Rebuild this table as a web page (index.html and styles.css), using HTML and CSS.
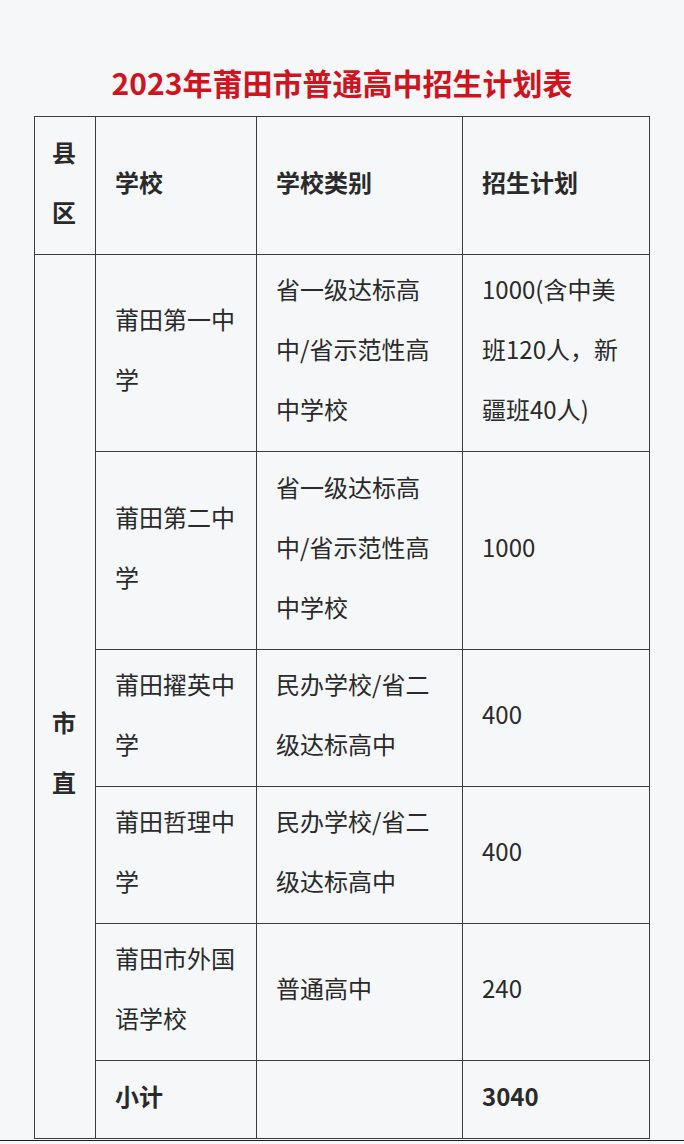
FILE: index.html
```html
<!DOCTYPE html>
<html lang="zh-CN">
<head>
<meta charset="utf-8">
<title>2023年莆田市普通高中招生计划表</title>
<link rel="stylesheet" href="styles.css">
</head>
<body>
<div class="page">
  <h1 class="title">2023年莆田市普通高中招生计划表</h1>
  <table class="plan">
    <colgroup>
      <col class="c1"><col class="c2"><col class="c3"><col class="c4">
    </colgroup>
    <thead>
      <tr>
        <th class="area">县<br>区</th>
        <th>学校</th>
        <th>学校类别</th>
        <th>招生计划</th>
      </tr>
    </thead>
    <tbody>
      <tr>
        <td class="area area-body" rowspan="6"><b>市<br>直</b></td>
        <td>莆田第一中<br>学</td>
        <td>省一级达标高<br>中/省示范性高<br>中学校</td>
        <td>1000(含中美<br>班120人，新<br>疆班40人)</td>
      </tr>
      <tr>
        <td>莆田第二中<br>学</td>
        <td>省一级达标高<br>中/省示范性高<br>中学校</td>
        <td>1000</td>
      </tr>
      <tr>
        <td>莆田擢英中<br>学</td>
        <td>民办学校/省二<br>级达标高中</td>
        <td>400</td>
      </tr>
      <tr>
        <td>莆田哲理中<br>学</td>
        <td>民办学校/省二<br>级达标高中</td>
        <td>400</td>
      </tr>
      <tr>
        <td>莆田市外国<br>语学校</td>
        <td>普通高中</td>
        <td>240</td>
      </tr>
      <tr>
        <td class="strong">小计</td>
        <td></td>
        <td class="strong">3040</td>
      </tr>
    </tbody>
  </table>
</div>
<div class="edge"></div>
</body>
</html>
```
FILE: styles.css
```css
html, body {
  margin: 0;
  padding: 0;
}
body {
  background: #f6f7f9;
  font-family: "Noto Sans CJK SC", "Noto Sans", sans-serif;
  color: #2a2a2a;
  height: 1144px;
  overflow: hidden;
}
.page {
  padding: 0 0 0 34px;
}
.title {
  margin: 0;
  padding-top: 60px;
  padding-right: 34px;
  box-sizing: border-box;
  height: 116px;
  line-height: 44px;
  text-align: center;
  font-size: 30px;
  letter-spacing: 0;
  font-weight: 700;
  color: #cf1420;
}
.plan {
  border-collapse: collapse;
  table-layout: fixed;
  width: 615px;
  font-size: 24px;
  line-height: 60px;
}
.plan col.c1 { width: 61px; }
.plan col.c2 { width: 161px; }
.plan col.c3 { width: 206px; }
.plan col.c4 { width: 187px; }
.plan th,
.plan td {
  border: 1px solid #3c3c3c;
  padding: 4.25px 12px 12px 19px;
  text-align: left;
  vertical-align: middle;
  word-break: break-all;
}
.plan th {
  font-weight: 700;
  padding-top: 5px;
  padding-bottom: 12px;
}
.plan th.area,
.plan td.area {
  padding-left: 17px;
  padding-right: 0;
}
.plan td.area-body {
  padding-top: 124px;
  padding-bottom: 12px;
}
.plan .strong {
  font-weight: 700;
}
.edge {
  height: 1px;
  margin-top: 1px;
  background: #1e1e1e;
}
```
